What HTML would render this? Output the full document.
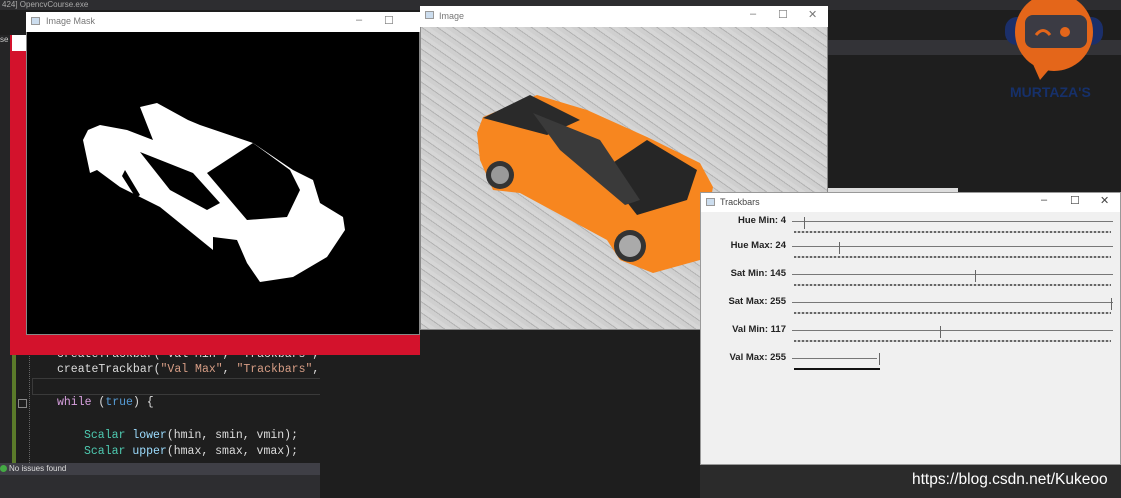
<!DOCTYPE html>
<html><head><style>
body{margin:0;width:1121px;height:498px;overflow:hidden;background:#1e1e1e;font-family:"Liberation Sans",sans-serif;position:relative}
div{position:absolute;box-sizing:border-box}
.tb{background:#fff;font-size:9px;color:#777}
.lbl{font-size:9.5px;font-weight:bold;color:#222;width:90px;text-align:right;left:0}
.ln{height:1px;background:#777;left:91px}
.dt{height:2px;left:93px;width:317px;background:repeating-linear-gradient(90deg,#666 0 2px,#ccc 2px 4px)}
.th{width:3px;height:12px;border-right:1.5px solid #666}
.code{font-family:"Liberation Mono",monospace;font-size:11.5px;color:#dcdcdc;white-space:pre;left:57px}
</style></head><body>
<div style="left:0;top:0;width:1121px;height:10px;background:#2d2d30;font-size:8px;color:#aaa;padding-left:2px">424] OpencvCourse.exe</div>
<div style="left:828px;top:40px;width:293px;height:15px;background:#333337"></div>
<svg style="position:absolute;left:1000px;top:0" width="121" height="100">
<rect x="5" y="17" width="98" height="28" rx="12" fill="#1b2f6a"/>
<path d="M32 62 L40 80 L52 66Z" fill="#e4661a"/>
<circle cx="54" cy="32" r="39" fill="#e4661a"/>
<rect x="25" y="15" width="62" height="33" rx="8" fill="#3b3b44"/>
<path d="M36 35 q7 -9 14 0" stroke="#e4661a" stroke-width="3" fill="none"/>
<circle cx="65" cy="32" r="5" fill="#e4661a"/>
<text x="10" y="97" font-size="14" font-weight="bold" fill="#16306a" font-family="Liberation Sans">MURTAZA'S</text>
</svg>
<div style="left:0;top:35px;width:12px;height:430px;background:#252526;font-size:8px;color:#ccc">se</div>
<div style="left:0;top:330px;width:320px;height:135px;overflow:hidden">
<div style="left:12px;top:0;width:4px;height:135px;background:#5a7a2a"></div>
<div style="left:29px;top:0;width:1px;height:135px;border-left:1px dotted #666"></div>
<div style="left:32px;top:48px;width:290px;height:17px;border:1px solid #3a3a3a"></div>
<div style="left:18px;top:69px;width:9px;height:9px;border:1px solid #888"></div>
<div class="code" style="top:18px">createTrackbar("Val Min", "Trackbars",</div>
<div class="code" style="top:33px">createTrackbar(<span style="color:#d69d85">"Val Max"</span>, <span style="color:#d69d85">"Trackbars"</span>,</div>
<div class="code" style="top:66px"><span style="color:#d8a0df">while</span> (<span style="color:#569cd6">true</span>) {</div>
<div class="code" style="top:99px;left:84px"><span style="color:#4ec9b0">Scalar</span> <span style="color:#9cdcfe">lower</span>(hmin, smin, vmin);</div>
<div class="code" style="top:115px;left:84px"><span style="color:#4ec9b0">Scalar</span> <span style="color:#9cdcfe">upper</span>(hmax, smax, vmax);</div>
</div>
<div style="left:10px;top:35px;width:410px;height:320px;background:#d3122c"></div>
<div style="left:12px;top:35px;width:16px;height:16px;background:#fff"></div>
<div style="left:0;top:463px;width:320px;height:12px;background:#3f3f46;font-size:8px;color:#ddd;padding-left:9px;line-height:12px">No issues found</div>
<div style="left:0;top:465px;width:7px;height:7px;border-radius:50%;background:#4a4"></div>
<div style="left:0;top:475px;width:320px;height:23px;background:#2d2d30"></div>
<div style="left:26px;top:12px;width:394px;height:323px;background:#000;border:1px solid #888"></div>
<div class="tb" style="left:26px;top:12px;width:394px;height:20px;padding:4px 0 0 20px">Image Mask<span style="position:absolute;left:330px;top:2px;font-size:11px">–</span><span style="position:absolute;left:358px;top:2px;font-size:11px">☐</span></div>
<div style="left:31px;top:17px;width:9px;height:8px;border:1px solid #999;background:#cde"></div>
<svg style="position:absolute;left:0;top:0" width="420" height="335">
<path d="M88 130 L100 125 L127 130 L153 140 L140 107 L157 103 L188 120 L200 125 L253 143 L293 170 L313 180 L320 203 L343 217 L345 230 L327 257 L293 277 L260 282 L247 263 L237 240 L213 237 L213 250 L160 207 L140 197 L120 187 L97 170 L90 173 L83 140Z" fill="#fff"/>
<path d="M207 173 L253 143 L290 170 L300 190 L287 217 L247 220Z" fill="#000"/>
<path d="M140 152 L193 173 L220 203 L207 210 L170 190Z" fill="#000"/>
<path d="M125 170 L140 195 L136 198 L122 176Z" fill="#000"/>
</svg>
<div style="left:420px;top:6px;width:408px;height:324px;border:1px solid #888;background:#c4c4c4;background-image:repeating-linear-gradient(35deg,#cfcfcf 0 4px,#b2b2b2 4px 5px,#d6d6d6 5px 9px),repeating-linear-gradient(-20deg,transparent 0 6px,rgba(120,120,120,.25) 6px 7px)"></div>
<div class="tb" style="left:420px;top:6px;width:408px;height:21px;padding:5px 0 0 19px">Image<span style="position:absolute;left:330px;top:2px;font-size:11px">–</span><span style="position:absolute;left:358px;top:2px;font-size:11px">☐</span><span style="position:absolute;left:388px;top:2px;font-size:11px">✕</span></div>
<div style="left:425px;top:11px;width:9px;height:8px;border:1px solid #999;background:#cde"></div>
<svg style="position:absolute;left:420px;top:27px" width="408" height="303" viewBox="420 27 408 303">
<path d="M483 117 L537 95 L587 110 L647 137 L700 163 L713 187 L700 260 L653 273 L620 260 L607 240 L520 193 L493 190 L480 160 L477 133Z" fill="#f7861f"/>
<path d="M602 170 L647 140 L697 170 L687 200 L637 215Z" fill="#262626"/>
<path d="M483 118 L530 95 L580 120 L547 135Z" fill="#2a2a2a"/>
<path d="M533 113 L600 140 L640 200 L625 205 L560 150Z" fill="#3a3a3a"/>
<circle cx="500" cy="175" r="14" fill="#333"/><circle cx="500" cy="175" r="9" fill="#999"/>
<circle cx="630" cy="246" r="16" fill="#333"/><circle cx="630" cy="246" r="11" fill="#aaa"/>
</svg>
<div style="left:828px;top:188px;width:130px;height:4px;background:#ddd"></div>
<div style="left:700px;top:192px;width:421px;height:273px;background:#f0f0f0;border:1px solid #999">
<div class="tb" style="left:0;top:0;width:419px;height:19px;padding:4px 0 0 19px;color:#444">Trackbars<span style="position:absolute;left:340px;top:1px;font-size:11px">–</span><span style="position:absolute;left:369px;top:1px;font-size:11px">☐</span><span style="position:absolute;left:399px;top:1px;font-size:11px">✕</span></div>
<div style="left:5px;top:5px;width:9px;height:8px;border:1px solid #999;background:#cde"></div>
<div class="lbl" style="top:22px;left:-5px">Hue Min: 4</div><div class="ln" style="top:28px;width:321px"></div><div class="dt" style="top:38px"></div><div class="th" style="left:101px;top:24px"></div>
<div class="lbl" style="top:47px;left:-5px">Hue Max: 24</div><div class="ln" style="top:53px;width:321px"></div><div class="dt" style="top:63px"></div><div class="th" style="left:136px;top:49px"></div>
<div class="lbl" style="top:75px;left:-5px">Sat Min: 145</div><div class="ln" style="top:81px;width:321px"></div><div class="dt" style="top:91px"></div><div class="th" style="left:272px;top:77px"></div>
<div class="lbl" style="top:103px;left:-5px">Sat Max: 255</div><div class="ln" style="top:109px;width:321px"></div><div class="dt" style="top:119px"></div><div class="th" style="left:408px;top:105px"></div>
<div class="lbl" style="top:131px;left:-5px">Val Min: 117</div><div class="ln" style="top:137px;width:321px"></div><div class="dt" style="top:147px"></div><div class="th" style="left:237px;top:133px"></div>
<div class="lbl" style="top:159px;left:-5px">Val Max: 255</div><div class="ln" style="top:165px;width:85px"></div><div style="left:93px;top:175px;width:86px;height:2px;background:#111"></div><div class="th" style="left:176px;top:160px"></div>
</div>
<div style="left:700px;top:465px;width:421px;height:33px;background:#2b2b2b"></div>
<div style="left:912px;top:471px;font-size:15.5px;color:#fff">https://blog.csdn.net/Kukeoo</div>
</body></html>
